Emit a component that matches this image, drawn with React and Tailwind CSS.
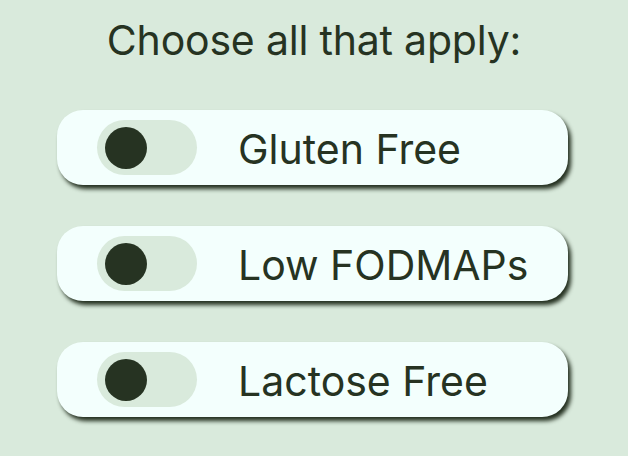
import React, { useState } from 'react';

const options = ['Gluten Free', 'Low FODMAPs', 'Lactose Free'];

const Toggle = ({ on }) => (
  <div className="w-[100px] h-[55px] rounded-full bg-[#d9eadc] flex items-center px-[8px] shrink-0">
    <div className={`w-[42px] h-[42px] rounded-full bg-[#263322] ${on ? 'ml-auto' : ''}`} />
  </div>
);

const App = () => {
  const [selected, setSelected] = useState({});

  return (
    <div
      className="w-[628px] h-[456px] bg-[#d9eadc] flex flex-col items-center text-[#263322]"
      style={{ fontFamily: 'Inter, "Noto Sans", sans-serif' }}
    >
      <h1 className="text-[41px] leading-none mt-[20px] tracking-[-0.2px]">Choose all that apply:</h1>
      <div className="flex flex-col gap-[41px] mt-[49px] mr-[3px]">
        {options.map((opt) => (
          <button
            key={opt}
            onClick={() => setSelected({ ...selected, [opt]: !selected[opt] })}
            className="w-[511px] h-[75px] rounded-[26px] bg-[#f3fffd] flex items-center pl-[40px] gap-[41px] shadow-[3px_4px_4px_#243020] text-left"
          >
            <Toggle on={!!selected[opt]} />
            <span className="text-[41px] leading-none pt-[4px]">{opt}</span>
          </button>
        ))}
      </div>
    </div>
  );
};

export default App;
